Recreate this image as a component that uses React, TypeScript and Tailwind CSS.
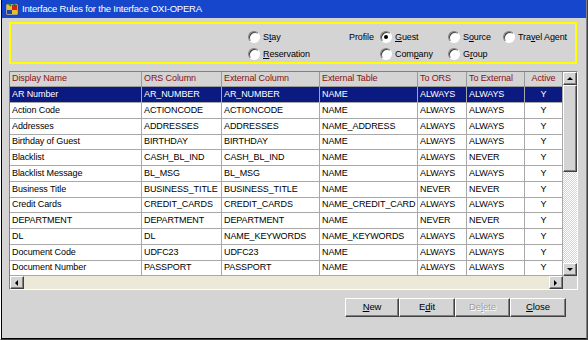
import React from "react";

const rows = [
  ["AR Number", "AR_NUMBER", "AR_NUMBER", "NAME", "ALWAYS", "ALWAYS", "Y"],
  ["Action Code", "ACTIONCODE", "ACTIONCODE", "NAME", "ALWAYS", "ALWAYS", "Y"],
  ["Addresses", "ADDRESSES", "ADDRESSES", "NAME_ADDRESS", "ALWAYS", "ALWAYS", "Y"],
  ["Birthday of Guest", "BIRTHDAY", "BIRTHDAY", "NAME", "ALWAYS", "ALWAYS", "Y"],
  ["Blacklist", "CASH_BL_IND", "CASH_BL_IND", "NAME", "ALWAYS", "NEVER", "Y"],
  ["Blacklist Message", "BL_MSG", "BL_MSG", "NAME", "ALWAYS", "ALWAYS", "Y"],
  ["Business Title", "BUSINESS_TITLE", "BUSINESS_TITLE", "NAME", "NEVER", "NEVER", "Y"],
  ["Credit Cards", "CREDIT_CARDS", "CREDIT_CARDS", "NAME_CREDIT_CARD", "ALWAYS", "ALWAYS", "Y"],
  ["DEPARTMENT", "DEPARTMENT", "DEPARTMENT", "NAME", "NEVER", "NEVER", "Y"],
  ["DL", "DL", "NAME_KEYWORDS", "NAME_KEYWORDS", "ALWAYS", "ALWAYS", "Y"],
  ["Document Code", "UDFC23", "UDFC23", "NAME", "ALWAYS", "ALWAYS", "Y"],
  ["Document Number", "PASSPORT", "PASSPORT", "NAME", "ALWAYS", "ALWAYS", "Y"],
];

const columns = [
  { label: "Display Name", w: "w-[132px]" },
  { label: "ORS Column", w: "w-[80px]" },
  { label: "External Column", w: "w-[98px]" },
  { label: "External Table", w: "w-[98px]" },
  { label: "To ORS", w: "w-[49px]" },
  { label: "To External", w: "w-[58px]" },
  { label: "Active", w: "w-[38px]" },
];

const Radio = ({ checked }: { checked?: boolean }) => (
  <span className="relative inline-block w-[12px] h-[12px] shrink-0 rounded-full bg-white border border-t-[#808080] border-l-[#808080] border-b-white border-r-white shadow-[inset_1px_1px_0_#404040]">
    {checked && <span className="absolute left-[3px] top-[3px] w-[4px] h-[4px] rounded-full bg-black" />}
  </span>
);

const Option = ({ pre, key1, post, checked }: { pre: string; key1: string; post: string; checked?: boolean }) => (
  <span className="flex items-center gap-[2px]">
    <Radio checked={checked} />
    <span className="ml-[1px] leading-[12px]">
      {pre}
      <span className="underline">{key1}</span>
      {post}
    </span>
  </span>
);

const Arrow = ({ dir }: { dir: "up" | "down" | "left" | "right" }) => {
  const pts = {
    up: "1,5 4,2 7,5",
    down: "1,2 4,5 7,2",
    left: "5,1 2,4 5,7",
    right: "2,1 5,4 2,7",
  }[dir];
  return (
    <span className="flex items-center justify-center w-[14px] h-[13px] bg-[#d4d4d4] border border-t-white border-l-white border-b-[#404040] border-r-[#404040] shadow-[inset_-1px_-1px_0_#808080]">
      <svg width="8" height="8" viewBox="0 0 8 8">
        <polygon points={pts} fill="#000" />
      </svg>
    </span>
  );
};

const Btn = ({ w, pre, key1, post, disabled }: { w: string; pre: string; key1: string; post: string; disabled?: boolean }) => (
  <button
    className={`${w} h-[19px] bg-[#d4d4d4] border border-t-white border-l-white border-b-[#404040] border-r-[#404040] shadow-[inset_-1px_-1px_0_#808080] text-[9.5px] ${
      disabled ? "text-[#a0a0a0] [text-shadow:1px_1px_0_#fff]" : "text-black"
    }`}
  >
    {pre}
    <span className="underline">{key1}</span>
    {post}
  </button>
);

export default function App() {
  return (
    <div className="w-[588px] h-[340px] bg-[#d4d4d4] border-l border-r border-b border-l-white border-r-[#404040] border-b-[#404040] font-['Liberation_Sans',Arial,sans-serif] text-[9px] tracking-[-0.1px] text-black overflow-hidden">
      <div className="h-full border-l border-r border-b border-l-black border-r-[#808080] border-b-black flex flex-col">
        <div className="h-[18px] bg-[#1646cc] flex items-center pl-[3px] gap-[3px] text-white text-[9.5px] tracking-[-0.2px]">
          <svg width="14" height="14" viewBox="0 0 14 14">
            <rect x="1" y="2" width="12" height="11" fill="#fff" stroke="#404040" />
            <rect x="2" y="3" width="5" height="5" fill="#e8c020" />
            <rect x="7" y="3" width="5" height="5" fill="#d02020" />
            <rect x="2" y="8" width="5" height="4" fill="#2040c0" />
            <rect x="7" y="8" width="5" height="4" fill="#e8c020" />
            <path d="M3 1 L6 4 M11 1 L8 4" stroke="#208020" strokeWidth="1.5" />
          </svg>
          <span>Interface Rules for the Interface OXI-OPERA</span>
        </div>

        <div className="pl-[7px] pt-[4px] flex flex-col">
          <div className="w-[568px] h-[42px] border-2 border-[#ffff00] flex flex-col pt-[7px] gap-[5px] pl-[237px]">
            <div className="flex items-center h-[12px]">
              <span className="w-[101px]">
                <Option pre="S" key1="t" post="ay" />
              </span>
              <span className="w-[31px] leading-[12px]">Profile</span>
              <span className="w-[68px]">
                <Option pre="" key1="G" post="uest" checked />
              </span>
              <span className="w-[55px]">
                <Option pre="S" key1="o" post="urce" />
              </span>
              <Option pre="Tra" key1="v" post="el Agent" />
            </div>
            <div className="flex items-center h-[12px]">
              <span className="w-[132px]">
                <Option pre="" key1="R" post="eservation" />
              </span>
              <span className="w-[68px]">
                <Option pre="Com" key1="p" post="any" />
              </span>
              <Option pre="G" key1="r" post="oup" />
            </div>
          </div>

          <div className="mt-[7px] w-[569px] border border-t-[#808080] border-l-[#808080] border-b-white border-r-white flex flex-col">
            <div className="flex">
              <div className="flex flex-col w-[553px] bg-white">
                <div className="flex h-[15px] bg-[#d4d4d4]">
                  {columns.map((c, i) => (
                    <div
                      key={c.label}
                      className={`${c.w} shrink-0 border-r border-b border-[#9a9a9a] text-[#8b1010] flex items-center px-[2px] overflow-hidden whitespace-nowrap ${
                        i === 6 ? "justify-center" : ""
                      }`}
                    >
                      {c.label}
                    </div>
                  ))}
                </div>
                {rows.map((r, ri) => (
                  <div
                    key={r[0]}
                    className={`flex ${ri % 4 === 3 ? "h-[15px]" : "h-[16px]"} ${
                      ri === 0 ? "bg-[#0a1a80] text-white" : "bg-white"
                    }`}
                  >
                    {r.map((cell, ci) => (
                      <div
                        key={ci}
                        className={`${columns[ci].w} shrink-0 border-r border-b border-[#a8a8a8] flex items-center px-[2px] overflow-hidden whitespace-nowrap ${
                          ci === 6 ? "justify-center" : ""
                        }`}
                      >
                        {cell}
                      </div>
                    ))}
                  </div>
                ))}
              </div>
              <div className="w-[14px] flex flex-col bg-[#ebebeb]">
                <Arrow dir="up" />
                <div className="h-[87px] bg-[#d4d4d4] border border-t-white border-l-white border-b-[#404040] border-r-[#404040] shadow-[inset_-1px_-1px_0_#808080]" />
                <div className="flex-1 bg-[repeating-conic-gradient(#ffffff_0_25%,#d4d4d4_0_50%)] bg-[length:2px_2px]" />
                <Arrow dir="down" />
              </div>
            </div>
            <div className="flex h-[13px]">
              <div className="w-[553px] flex bg-[#ece9d8]">
                <Arrow dir="left" />
                <div className="flex-1" />
                <Arrow dir="right" />
              </div>
              <div className="w-[14px] bg-[#d4d4d4]" />
            </div>
          </div>

          <div className="mt-[8px] w-[557px] flex justify-end">
            <Btn w="w-[54px]" pre="" key1="N" post="ew" />
            <Btn w="w-[56px]" pre="E" key1="d" post="it" />
            <Btn w="w-[55px]" pre="De" key1="l" post="ete" disabled />
            <Btn w="w-[56px]" pre="" key1="C" post="lose" />
          </div>
        </div>
      </div>
    </div>
  );
}
